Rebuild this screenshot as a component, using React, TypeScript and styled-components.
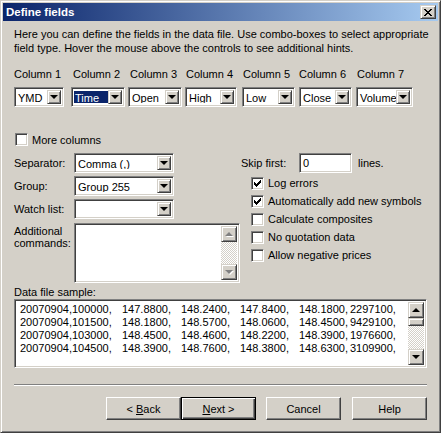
import React from 'react';
import styled, { createGlobalStyle, css } from 'styled-components';

const GlobalStyle = createGlobalStyle`
  html, body {
    margin: 0;
    padding: 0;
    background: #D4D0C8;
  }
  body {
    font-family: "Liberation Sans", Arial, sans-serif;
    font-size: 11px;
    color: #000;
  }
`;

const face = '#D4D0C8';

const sunken = css`
  box-sizing: border-box;
  border: 1px solid;
  border-color: #808080 #fff #fff #808080;
  box-shadow: inset 1px 1px 0 #404040, inset -1px -1px 0 ${face};
`;

const raised = css`
  box-sizing: border-box;
  border: 1px solid;
  border-color: ${face} #404040 #404040 ${face};
  box-shadow: inset 1px 1px 0 #fff, inset -1px -1px 0 #808080;
`;

const Window = styled.div`
  width: 441px;
  height: 433px;
  box-sizing: border-box;
  background: ${face};
  border: 1px solid;
  border-color: ${face} #404040 #404040 ${face};
  box-shadow: inset 1px 1px 0 #fff, inset -1px -1px 0 #808080;
  padding: 2px;
  display: flex;
  flex-direction: column;
`;

const TitleBar = styled.div`
  height: 18px;
  display: flex;
  align-items: center;
  justify-content: space-between;
  padding: 0 2px 0 3px;
  background: linear-gradient(90deg, #0A246A, #A6CAF0);
  color: #fff;
  font-weight: bold;
  font-size: 11.5px;
`;

const CloseBtn = styled.div`
  ${raised};
  width: 16px;
  height: 14px;
  background: ${face};
  display: flex;
  align-items: center;
  justify-content: center;
`;

const Body = styled.div`
  flex: 1;
  padding: 6px 11px 0 11px;
  display: flex;
  flex-direction: column;
`;

const Intro = styled.div`
  line-height: 14px;
  white-space: nowrap;
`;

const ColumnGrid = styled.div`
  margin-top: 12px;
  display: grid;
  grid-template-columns: repeat(7, 57px);
  row-gap: 6px;
`;

const ColLabel = styled.div<{ $shift?: number }>`
  line-height: 14px;
  white-space: nowrap;
  padding-left: ${p => p.$shift ?? 0}px;
`;

const ComboBox = styled.div<{ $w: number }>`
  ${sunken};
  width: ${p => p.$w}px;
  height: 20px;
  padding: 2px;
  background: #fff;
  display: flex;
`;

const ComboText = styled.div<{ $selected?: boolean }>`
  flex: 1;
  min-width: 0;
  overflow: hidden;
  white-space: nowrap;
  line-height: 14px;
  margin: 1px 0;
  padding-left: 1px;
  background: ${p => (p.$selected ? '#0A246A' : 'transparent')};
  color: ${p => (p.$selected ? '#fff' : '#000')};
`;

const DropButton = styled.div`
  ${raised};
  width: 14px;
  flex: none;
  background: ${face};
  display: flex;
  align-items: center;
  justify-content: center;
`;

const Arrow = styled.div<{ $up?: boolean; $disabled?: boolean }>`
  width: 0;
  height: 0;
  border-left: 4px solid transparent;
  border-right: 4px solid transparent;
  ${p =>
    p.$up
      ? css`border-bottom: 4px solid ${p.$disabled ? '#808080' : '#000'};`
      : css`border-top: 4px solid ${p.$disabled ? '#808080' : '#000'};`}
  filter: ${p => (p.$disabled ? 'drop-shadow(1px 1px 0 #fff)' : 'none')};
`;

const CheckRow = styled.label<{ $h?: number }>`
  display: flex;
  align-items: center;
  gap: 4px;
  height: ${p => p.$h ?? 13}px;
  white-space: nowrap;
`;

const CheckBox = styled.div`
  ${sunken};
  width: 13px;
  height: 13px;
  background: #fff;
  display: flex;
  align-items: center;
  justify-content: center;
  flex: none;
`;

const MoreRow = styled.div`
  margin-top: 26px;
  padding-left: 1px;
`;

const Middle = styled.div`
  margin-top: 7px;
  display: grid;
  grid-template-columns: 227px 1fr;
`;

const LeftCol = styled.div`
  display: flex;
  flex-direction: column;
  gap: 3px;
`;

const FieldRow = styled.div`
  display: flex;
  align-items: center;
`;

const FieldLabel = styled.div`
  width: 60px;
  flex: none;
  white-space: nowrap;
`;

const MultiRow = styled.div`
  display: flex;
  align-items: flex-start;
  margin-top: 1px;
`;

const MultiLabel = styled.div`
  width: 60px;
  line-height: 12px;
  padding-top: 2px;
`;

const MemoBox = styled.div<{ $w: number; $h: number }>`
  ${sunken};
  width: ${p => p.$w}px;
  height: ${p => p.$h}px;
  padding: 2px;
  background: #fff;
  display: flex;
`;

const MemoContent = styled.div`
  flex: 1;
  padding: 2px 0 0 3px;
  line-height: 13px;
  white-space: pre;
`;

const ScrollBar = styled.div`
  width: 16px;
  flex: none;
  display: flex;
  flex-direction: column;
`;

const ScrollArrow = styled.div`
  ${raised};
  height: 16px;
  background: ${face};
  display: flex;
  align-items: center;
  justify-content: center;
  flex: none;
`;

const ScrollTrack = styled.div`
  flex: 1;
  background: repeating-conic-gradient(${face} 0 25%, #fff 0 50%) 0 0 / 2px 2px;
`;

const ScrollThumb = styled.div`
  ${raised};
  height: 8px;
  background: ${face};
  flex: none;
`;

const RightCol = styled.div`
  display: flex;
  flex-direction: column;
`;

const SkipRow = styled.div`
  display: flex;
  align-items: center;
`;

const SkipLabel = styled.div`
  width: 58px;
`;

const TextInput = styled.div<{ $w: number }>`
  ${sunken};
  width: ${p => p.$w}px;
  height: 20px;
  padding: 2px 3px;
  background: #fff;
  line-height: 14px;
  margin-right: 6px;
`;

const CheckList = styled.div`
  margin-top: 1px;
  padding-left: 10px;
  display: flex;
  flex-direction: column;
`;

const SampleLabel = styled.div`
  margin-top: 2px;
  line-height: 14px;
`;

const DataRows = styled.div`
  flex: 1;
  padding: 1px 0 0 3px;
  display: flex;
  flex-direction: column;
`;

const DataRow = styled.div`
  display: grid;
  grid-template-columns: 102px 59px 59px 59px 51px auto;
  line-height: 13px;
  white-space: pre;
`;

const Separator = styled.div`
  margin-top: 16px;
  height: 0;
  border-top: 1px solid #808080;
  border-bottom: 1px solid #fff;
`;

const ButtonBar = styled.div`
  margin-top: 11px;
  display: flex;
  justify-content: flex-end;
`;

const Button = styled.div<{ $default?: boolean; $gap?: number }>`
  width: 75px;
  height: 23px;
  box-sizing: border-box;
  margin-left: ${p => p.$gap ?? 0}px;
  background: ${face};
  display: flex;
  align-items: center;
  justify-content: center;
  ${p =>
    p.$default
      ? css`
          border: 1px solid #000;
          box-shadow: inset 1px 1px 0 #fff, inset -1px -1px 0 #404040, inset -2px -2px 0 #808080;
        `
      : css`
          border: 1px solid;
          border-color: #fff #404040 #404040 #fff;
          box-shadow: inset -1px -1px 0 #808080;
        `}
`;

const CloseGlyph = () => (
  <svg width="8" height="7" viewBox="0 0 8 7" shapeRendering="crispEdges">
    <path
      d="M0 0h2v1H0zM6 0h2v1H6zM1 1h2v1H1zM5 1h2v1H5zM2 2h4v1H2zM3 3h2v1H3zM2 4h4v1H2zM1 5h2v1H1zM5 5h2v1H5zM0 6h2v1H0zM6 6h2v1H6z"
      fill="#000"
    />
  </svg>
);

const CheckGlyph = () => (
  <svg width="7" height="7" viewBox="0 0 7 7" shapeRendering="crispEdges">
    <path
      d="M0 2h1v3H0zM1 3h1v3H1zM2 4h1v3H2zM3 3h1v3H3zM4 2h1v3H4zM5 1h1v3H5zM6 0h1v3H6z"
      fill="#000"
    />
  </svg>
);

const Combo = ({ w, value, selected }: { w: number; value: string; selected?: boolean }) => (
  <ComboBox $w={w}>
    <ComboText $selected={selected}>{value}</ComboText>
    <DropButton>
      <Arrow />
    </DropButton>
  </ComboBox>
);

const Check = ({ label, checked, h }: { label: string; checked?: boolean; h?: number }) => (
  <CheckRow $h={h}>
    <CheckBox>{checked && <CheckGlyph />}</CheckBox>
    <span>{label}</span>
  </CheckRow>
);

const columns = [
  { label: 'Column 1', value: 'YMD', w: 50, shift: 0 },
  { label: 'Column 2', value: 'Time', w: 54, shift: 2, selected: true },
  { label: 'Column 3', value: 'Open', w: 54, shift: 2 },
  { label: 'Column 4', value: 'High', w: 52, shift: 1 },
  { label: 'Column 5', value: 'Low', w: 53, shift: 1 },
  { label: 'Column 6', value: 'Close', w: 53, shift: 0 },
  { label: 'Column 7', value: 'Volume', w: 57, shift: 1 },
];

const sample = [
  ['20070904,100000,', '147.8800,', '148.2400,', '147.8400,', '148.1800,', '2297100,'],
  ['20070904,101500,', '148.1800,', '148.5700,', '148.0600,', '148.4500,', '9429100,'],
  ['20070904,103000,', '148.4500,', '148.4600,', '148.2200,', '148.3900,', '1976600,'],
  ['20070904,104500,', '148.3900,', '148.7600,', '148.3800,', '148.6300,', '3109900,'],
];

export default function App() {
  return (
    <>
      <GlobalStyle />
      <Window>
        <TitleBar>
          <span>Define fields</span>
          <CloseBtn>
            <CloseGlyph />
          </CloseBtn>
        </TitleBar>
        <Body>
          <Intro>
            Here you can define the fields in the data file. Use combo-boxes to select appropriate
            <br />
            field type. Hover the mouse above the controls to see additional hints.
          </Intro>

          <ColumnGrid>
            {columns.map(c => (
              <ColLabel key={c.label} $shift={c.shift}>{c.label}</ColLabel>
            ))}
            {columns.map(c => (
              <Combo key={c.label} w={c.w} value={c.value} selected={c.selected} />
            ))}
          </ColumnGrid>

          <MoreRow>
            <Check label="More columns" />
          </MoreRow>

          <Middle>
            <LeftCol>
              <FieldRow>
                <FieldLabel>Separator:</FieldLabel>
                <Combo w={100} value="Comma (,)" />
              </FieldRow>
              <FieldRow>
                <FieldLabel>Group:</FieldLabel>
                <Combo w={100} value="Group 255" />
              </FieldRow>
              <FieldRow>
                <FieldLabel>Watch list:</FieldLabel>
                <Combo w={100} value="" />
              </FieldRow>
              <MultiRow>
                <MultiLabel>
                  Additional
                  <br />
                  commands:
                </MultiLabel>
                <MemoBox $w={166} $h={60}>
                  <MemoContent />
                  <ScrollBar>
                    <ScrollArrow>
                      <Arrow $up $disabled />
                    </ScrollArrow>
                    <ScrollTrack />
                    <ScrollArrow>
                      <Arrow $disabled />
                    </ScrollArrow>
                  </ScrollBar>
                </MemoBox>
              </MultiRow>
            </LeftCol>

            <RightCol>
              <SkipRow>
                <SkipLabel>Skip first:</SkipLabel>
                <TextInput $w={53}>0</TextInput>
                <span>lines.</span>
              </SkipRow>
              <CheckList>
                <Check h={18} checked label="Log errors" />
                <Check h={18} checked label="Automatically add new symbols" />
                <Check h={18} label="Calculate composites" />
                <Check h={18} label="No quotation data" />
                <Check h={18} label="Allow negative prices" />
              </CheckList>
            </RightCol>
          </Middle>

          <SampleLabel>Data file sample:</SampleLabel>
          <MemoBox $w={413} $h={69}>
            <DataRows>
              {sample.map((row, i) => (
                <DataRow key={i}>
                  {row.map((v, j) => (
                    <span key={j}>{v}</span>
                  ))}
                </DataRow>
              ))}
            </DataRows>
            <ScrollBar>
              <ScrollArrow>
                <Arrow $up />
              </ScrollArrow>
              <ScrollThumb />
              <ScrollTrack />
              <ScrollArrow>
                <Arrow />
              </ScrollArrow>
            </ScrollBar>
          </MemoBox>

          <Separator />

          <ButtonBar>
            <Button>
              &lt;&nbsp;<u>B</u>ack
            </Button>
            <Button $default>
              <u>N</u>ext&nbsp;&gt;
            </Button>
            <Button $gap={10}>Cancel</Button>
            <Button $gap={11}>Help</Button>
          </ButtonBar>
        </Body>
      </Window>
    </>
  );
}
